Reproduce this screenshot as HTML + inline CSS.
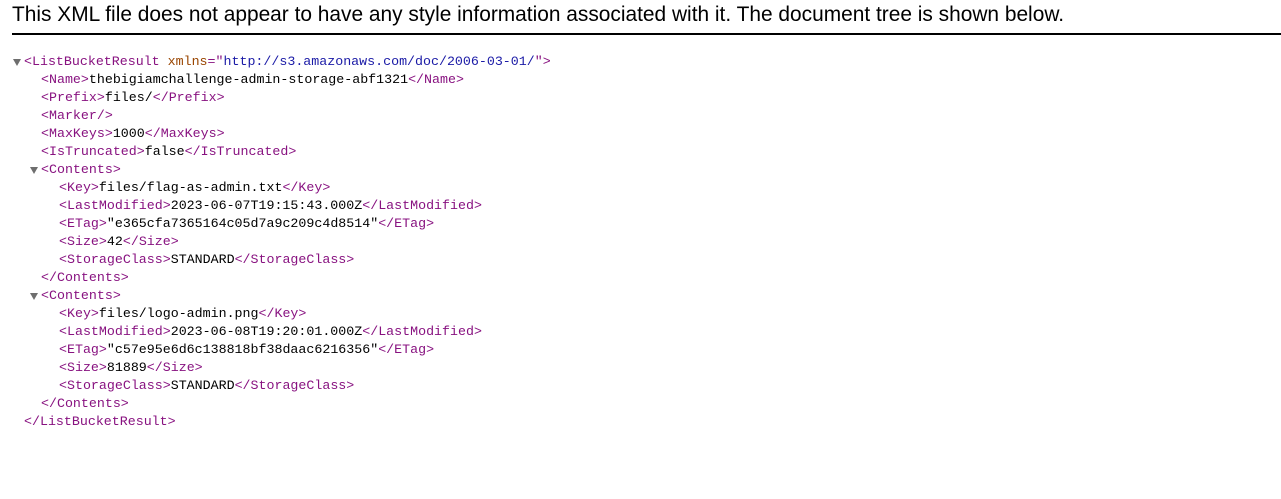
<!DOCTYPE html>
<html><head><style>
body{margin:0;background:#fff;width:1281px;height:499px;overflow:hidden;}
.hdr{position:absolute;left:12px;top:3px;font-family:"Liberation Sans",sans-serif;font-size:20.9px;color:#000;white-space:nowrap;}
.rule{position:absolute;left:12px;right:0;top:33px;height:2px;background:#000;}
.tree{position:absolute;left:0;top:53px;font-family:"Liberation Mono","Noto Sans CJK SC",monospace;font-size:13.3px;line-height:18px;color:#000;}
.l{position:relative;height:18px;white-space:pre;}
.t{color:#881280}.an{color:#994500}.av{color:#1a1aa6}
.tri{position:absolute;width:0;height:0;border-left:4px solid transparent;border-right:4px solid transparent;border-top:7px solid #6e6e6e;top:6px;}
</style></head><body>
<div class="hdr">This XML file does not appear to have any style information associated with it. The document tree is shown below.</div>
<div class="rule"></div>
<div class="tree"><div class="l" style="padding-left:24px"><span class="tri" style="left:13px"></span><span class="t">&lt;ListBucketResult</span> <span class="an">xmlns</span><span class="t">="</span><span class="av">http://s3.amazonaws.com/doc/2006-03-01/</span><span class="t">"&gt;</span></div><div class="l" style="padding-left:41px"><span class="t">&lt;Name&gt;</span>thebigiamchallenge-admin-storage-abf1321<span class="t">&lt;/Name&gt;</span></div><div class="l" style="padding-left:41px"><span class="t">&lt;Prefix&gt;</span>files/<span class="t">&lt;/Prefix&gt;</span></div><div class="l" style="padding-left:41px"><span class="t">&lt;Marker/&gt;</span></div><div class="l" style="padding-left:41px"><span class="t">&lt;MaxKeys&gt;</span>1000<span class="t">&lt;/MaxKeys&gt;</span></div><div class="l" style="padding-left:41px"><span class="t">&lt;IsTruncated&gt;</span>false<span class="t">&lt;/IsTruncated&gt;</span></div><div class="l" style="padding-left:41px"><span class="tri" style="left:30px"></span><span class="t">&lt;Contents&gt;</span></div><div class="l" style="padding-left:59px"><span class="t">&lt;Key&gt;</span>files/flag-as-admin.txt<span class="t">&lt;/Key&gt;</span></div><div class="l" style="padding-left:59px"><span class="t">&lt;LastModified&gt;</span>2023-06-07T19:15:43.000Z<span class="t">&lt;/LastModified&gt;</span></div><div class="l" style="padding-left:59px"><span class="t">&lt;ETag&gt;</span>"e365cfa7365164c05d7a9c209c4d8514"<span class="t">&lt;/ETag&gt;</span></div><div class="l" style="padding-left:59px"><span class="t">&lt;Size&gt;</span>42<span class="t">&lt;/Size&gt;</span></div><div class="l" style="padding-left:59px"><span class="t">&lt;StorageClass&gt;</span>STANDARD<span class="t">&lt;/StorageClass&gt;</span></div><div class="l" style="padding-left:41px"><span class="t">&lt;/Contents&gt;</span></div><div class="l" style="padding-left:41px"><span class="tri" style="left:30px"></span><span class="t">&lt;Contents&gt;</span></div><div class="l" style="padding-left:59px"><span class="t">&lt;Key&gt;</span>files/logo-admin.png<span class="t">&lt;/Key&gt;</span></div><div class="l" style="padding-left:59px"><span class="t">&lt;LastModified&gt;</span>2023-06-08T19:20:01.000Z<span class="t">&lt;/LastModified&gt;</span></div><div class="l" style="padding-left:59px"><span class="t">&lt;ETag&gt;</span>"c57e95e6d6c138818bf38daac6216356"<span class="t">&lt;/ETag&gt;</span></div><div class="l" style="padding-left:59px"><span class="t">&lt;Size&gt;</span>81889<span class="t">&lt;/Size&gt;</span></div><div class="l" style="padding-left:59px"><span class="t">&lt;StorageClass&gt;</span>STANDARD<span class="t">&lt;/StorageClass&gt;</span></div><div class="l" style="padding-left:41px"><span class="t">&lt;/Contents&gt;</span></div><div class="l" style="padding-left:24px"><span class="t">&lt;/ListBucketResult&gt;</span></div></div>
</body></html>
